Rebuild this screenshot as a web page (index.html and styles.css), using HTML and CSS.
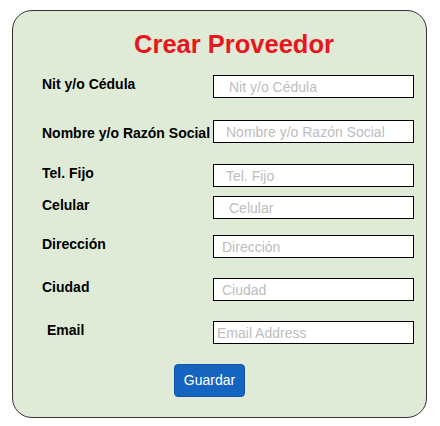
FILE: index.html
```html
<!DOCTYPE html>
<html lang="es">
<head>
<meta charset="utf-8">
<title>Crear Proveedor</title>
<link rel="stylesheet" href="styles.css">
</head>
<body>
<form class="card">
  <h1 class="title">Crear Proveedor</h1>
  <div class="row row-1">
    <label class="label">Nit y/o Cédula</label>
    <input class="field pad-15" type="text" placeholder="Nit y/o Cédula">
  </div>
  <div class="row row-2">
    <label class="label label-low">Nombre y/o Razón Social</label>
    <input class="field pad-12" type="text" placeholder="Nombre y/o Razón Social">
  </div>
  <div class="row row-3">
    <label class="label">Tel. Fijo</label>
    <input class="field pad-12" type="text" placeholder="Tel. Fijo">
  </div>
  <div class="row row-4">
    <label class="label">Celular</label>
    <input class="field pad-15" type="text" placeholder="Celular">
  </div>
  <div class="row row-5">
    <label class="label">Dirección</label>
    <input class="field pad-8" type="text" placeholder="Dirección">
  </div>
  <div class="row row-6">
    <label class="label">Ciudad</label>
    <input class="field pad-8" type="text" placeholder="Ciudad">
  </div>
  <div class="row row-7">
    <label class="label label-indent">Email</label>
    <input class="field pad-3" type="email" placeholder="Email Address">
  </div>
  <div class="actions">
    <button class="btn" type="button">Guardar</button>
  </div>
</form>
</body>
</html>
```
FILE: styles.css
```css
html, body {
  margin: 0;
  padding: 0;
  background: #ffffff;
}

body {
  font-family: "Liberation Sans", Arial, sans-serif;
}

.card {
  box-sizing: border-box;
  width: 415px;
  height: 408px;
  margin: 10px 0 0 12px;
  padding: 19px 12px 20px 0;
  background: #dfebd6;
  border: 1px solid #333333;
  border-radius: 20px;
}

.title {
  margin: 0;
  padding-left: 41px;
  font-size: 25.5px;
  line-height: 29px;
  font-weight: bold;
  color: #e8161c;
  text-align: center;
}

.row {
  display: flex;
  align-items: center;
  height: 23px;
  padding-left: 29px;
}

.row-1 { margin-top: 16px; }
.row-2 { margin-top: 22px; }
.row-3 { margin-top: 21px; }
.row-4 { margin-top: 9px; }
.row-5 { margin-top: 16px; }
.row-6 { margin-top: 20px; }
.row-7 { margin-top: 20px; }

.label {
  box-sizing: border-box;
  width: 171px;
  flex: none;
  padding-bottom: 5px;
  font-size: 14px;
  line-height: 16px;
  font-weight: bold;
  color: #000000;
  white-space: nowrap;
}

.label-low {
  padding-bottom: 0;
  padding-top: 3px;
}

.label-indent {
  padding-left: 5px;
}

.field {
  box-sizing: border-box;
  width: 201px;
  height: 23px;
  margin: 0;
  padding: 0 4px;
  border: 1px solid #000000;
  border-radius: 0;
  background: #ffffff;
  font-family: "Liberation Sans", Arial, sans-serif;
  font-size: 14px;
  color: #000000;
  outline: none;
}

.field::placeholder {
  color: #bdbdbd;
  opacity: 1;
}

.pad-15 { padding-left: 15px; }
.pad-12 { padding-left: 12px; }
.pad-8 { padding-left: 8px; }
.pad-3 { padding-left: 3px; }

.actions {
  display: flex;
  margin-top: 20px;
  padding-left: 161px;
}

.btn {
  box-sizing: border-box;
  width: 71px;
  height: 33px;
  padding: 0;
  background: #1565c0;
  border: 1px solid #0f56a8;
  border-radius: 4px;
  color: #ffffff;
  font-family: "Liberation Sans", Arial, sans-serif;
  font-size: 14px;
  line-height: 31px;
  cursor: pointer;
}
```
